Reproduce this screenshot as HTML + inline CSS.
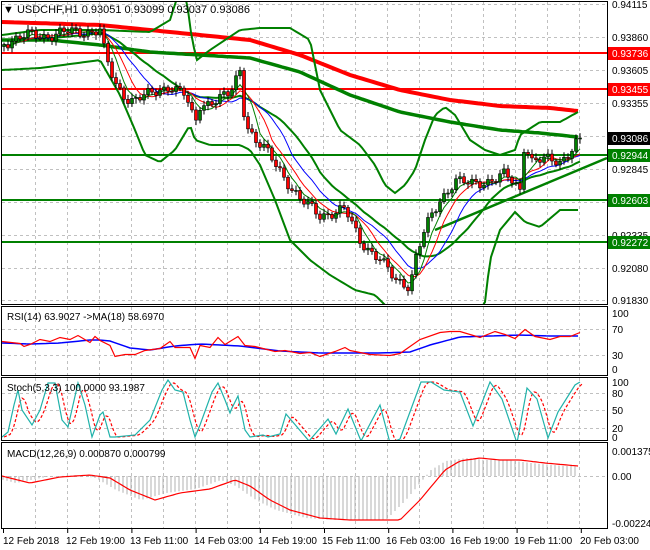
<!DOCTYPE html>
<html><head><meta charset="utf-8"><style>
html,body{margin:0;padding:0;background:#fff;}
svg{display:block;font-family:"Liberation Sans",sans-serif;}
</style></head><body>
<svg id="s" width="650" height="550" xmlns="http://www.w3.org/2000/svg">
<rect x="0" y="0" width="650" height="550" fill="#fff"/>
<defs>
<clipPath id="cm"><rect x="2" y="2" width="606" height="302"/></clipPath>
<clipPath id="cr"><rect x="2" y="308" width="606" height="67"/></clipPath>
<clipPath id="cs"><rect x="2" y="379" width="606" height="61"/></clipPath>
<clipPath id="cd"><rect x="2" y="444" width="606" height="84"/></clipPath>
</defs>
<g id="grid" stroke="#c0c0c0" stroke-dasharray="3,3" stroke-width="1"></g>
<g id="main" clip-path="url(#cm)"></g>
<g id="ind"></g>
<g fill="none" stroke="#000" stroke-width="1">
<rect x="1.5" y="1.5" width="606" height="303"/>
<rect x="1.5" y="306.5" width="606" height="69"/>
<rect x="1.5" y="377.5" width="606" height="63"/>
<rect x="1.5" y="442.5" width="606" height="86"/>
</g>
<g id="ticks" stroke="#000"></g>
<g font-size="10" fill="#000">
<text x="3" y="13" font-size="11">▼ USDCHF,H1  0.93051 0.93099 0.93037 0.93086</text>
<text x="612" y="8">0.94115</text>
<text x="612" y="41">0.93860</text>
<text x="612" y="74">0.93605</text>
<text x="612" y="107">0.93355</text>
<text x="612" y="173">0.92845</text>
<text x="612" y="239">0.92335</text>
<text x="612" y="272">0.92080</text>
<text x="612" y="304">0.91830</text>
<rect x="608" y="47" width="42" height="13" fill="#f00"/><text x="612" y="57" fill="#fff">0.93736</text>
<rect x="608" y="83" width="42" height="13" fill="#f00"/><text x="612" y="93" fill="#fff">0.93455</text>
<rect x="608" y="132" width="42" height="13" fill="#000"/><text x="612" y="142" fill="#fff">0.93086</text>
<rect x="608" y="149" width="42" height="13" fill="#008000"/><text x="612" y="159" fill="#fff">0.92944</text>
<rect x="608" y="194" width="42" height="13" fill="#008000"/><text x="612" y="204" fill="#fff">0.92603</text>
<rect x="608" y="236" width="42" height="13" fill="#008000"/><text x="612" y="246" fill="#fff">0.92272</text>
<text x="7" y="320">RSI(14) 63.9027  -&gt;MA(18) 58.6970</text>
<text x="612" y="317">100</text><text x="612" y="333">70</text><text x="612" y="359">30</text><text x="612" y="373">0</text>
<text x="7" y="391">Stoch(5,3,3) 100.0000 93.1987</text>
<text x="612" y="386">100</text><text x="612" y="397">80</text><text x="612" y="414">50</text><text x="612" y="432">20</text><text x="612" y="441">0</text>
<text x="7" y="457">MACD(12,26,9) 0.000870 0.000799</text>
<text x="612" y="455">0.001375</text><text x="612" y="480">0.00</text><text x="612" y="527">-0.002245</text>
<text x="3" y="544">12 Feb 2018</text>
<text x="66" y="544">12 Feb 19:00</text>
<text x="130" y="544">13 Feb 11:00</text>
<text x="194" y="544">14 Feb 03:00</text>
<text x="258" y="544">14 Feb 19:00</text>
<text x="322" y="544">15 Feb 11:00</text>
<text x="386" y="544">16 Feb 03:00</text>
<text x="450" y="544">16 Feb 19:00</text>
<text x="514" y="544">19 Feb 11:00</text>
<text x="580" y="544">20 Feb 03:00</text>
</g>
</svg>
<script>
var NS="http://www.w3.org/2000/svg";
function el(p,t,a){var e=document.createElementNS(NS,t);for(var k in a)e.setAttribute(k,a[k]);p.appendChild(e);return e;}
function interp(P,x){if(x<=P[0][0])return P[0][1];for(var i=1;i<P.length;i++){if(x<=P[i][0]){var a=P[i-1],b=P[i];return a[1]+(b[1]-a[1])*(x-a[0])/(b[0]-a[0]);}}return P[P.length-1][1];}
function pl(P){return P.map(function(p){return p[0].toFixed(1)+","+p[1].toFixed(1)}).join(" ");}
function curve(P,x0,x1,st){var r=[];for(var x=x0;x<=x1;x+=st)r.push([x,interp(P,x)]);return r;}
var g=document.getElementById("grid");
for(var x=35;x<607;x+=32){[[2,304],[307,375],[378,440],[443,528]].forEach(function(r){el(g,"line",{x1:x+.5,y1:r[0],x2:x+.5,y2:r[1]});});}
[4,37,70,103,136,169,202,235,268,300].forEach(function(y){el(g,"line",{x1:2,y1:y+.5,x2:607,y2:y+.5});});
[329,355].forEach(function(y){el(g,"line",{x1:2,y1:y+.5,x2:607,y2:y+.5});});
[393,410,428].forEach(function(y){el(g,"line",{x1:2,y1:y+.5,x2:607,y2:y+.5});});
[476].forEach(function(y){el(g,"line",{x1:2,y1:y+.5,x2:607,y2:y+.5});});
var tk=document.getElementById("ticks");
for(var x=3;x<607;x+=64.2){el(tk,"line",{x1:x+.5,y1:529,x2:x+.5,y2:533});}
var m=document.getElementById("main");
[[53,"#f00"],[89,"#f00"],[155,"#008000"],[200,"#008000"],[242,"#008000"]].forEach(function(l){el(m,"line",{x1:2,y1:l[0],x2:607,y2:l[0],stroke:l[1],"stroke-width":2});});
el(m,"polyline",{points:pl(curve([[2,22],[100,25],[150,30],[200,35],[250,40],[300,55],[350,75],[400,90],[450,100],[500,106],[550,108],[578,111]],2,578,4)),fill:"none",stroke:"#f00","stroke-width":4});
el(m,"polyline",{points:pl(curve([[2,40],[50,40],[100,45],[150,52],[200,55],[250,58],[300,72],[350,95],[400,112],[450,122],[500,130],[540,133],[578,137]],2,578,4)),fill:"none",stroke:"#008000","stroke-width":3.5});
el(m,"line",{x1:435,y1:230,x2:607,y2:158,stroke:"#008000","stroke-width":2.5});
var up=[[2,35],[40,30],[100,30],[150,32],[170,20],[178,-5],[186,-5],[192,40],[197,60],[210,50],[240,30],[260,28],[290,28],[310,40],[320,90],[340,130],[360,145],[375,165],[385,185],[395,193],[405,185],[415,170],[425,140],[435,115],[445,107],[455,115],[470,140],[485,150],[500,155],[515,150],[520,135],[540,122],[560,122],[578,112]];
var lo=[[2,70],[40,68],[100,60],[120,95],[135,130],[145,155],[160,162],[175,150],[190,125],[195,140],[210,145],[240,145],[250,150],[260,165],[275,200],[290,240],[310,260],[330,275],[355,290],[375,295],[390,310],[480,310],[485,302],[490,260],[500,230],[515,212],[525,222],[540,227],[560,210],[578,210]];
el(m,"polyline",{points:pl(curve(up,2,578,3)),fill:"none",stroke:"#008000","stroke-width":2});
el(m,"polyline",{points:pl(curve(lo,2,578,3)),fill:"none",stroke:"#008000","stroke-width":2});
var PR=[[4,42],[20,38],[30,35],[45,36],[60,33],[80,32],[100,30],[105,55],[115,85],[130,100],[150,95],[170,85],[185,95],[195,125],[200,105],[215,100],[230,95],[240,70],[245,120],[255,140],[265,150],[280,170],[300,200],[320,215],[345,210],[360,240],[380,260],[395,280],[410,285],[415,260],[425,230],[440,200],[455,180],[470,185],[490,180],[505,175],[515,185],[520,190],[525,135],[530,160],[540,160],[560,162],[570,150],[578,140]];
var N=145,cl=[],xs=[];
for(var i=0;i<N;i++){var x=4+i*4;xs.push(x);cl.push(interp(PR,x)+4*Math.sin(i*1.7)+3*Math.sin(i*0.63+1));}
cl[N-1]=138;
function sma(a,n){return a.map(function(v,i){var s=0,c=0;for(var j=Math.max(0,i-n+1);j<=i;j++){s+=a[j];c++;}return s/c;});}
var mid=sma(cl,20);
el(m,"polyline",{points:pl(xs.map(function(x,i){return[x,mid[i]]})),fill:"none",stroke:"#008000","stroke-width":2});
[[13,"#00f"],[8,"#f00"],[5,"#008000"]].forEach(function(q){var s=sma(cl,q[0]);el(m,"polyline",{points:pl(xs.map(function(x,i){return[x,s[i]]})),fill:"none",stroke:q[1],"stroke-width":1});});
for(var i=0;i<N;i++){var o=i?cl[i-1]:cl[0]+2,c=cl[i],x=xs[i];var hi=Math.min(o,c)-2-3*Math.abs(Math.sin(i*2.3)),lw=Math.max(o,c)+2+3*Math.abs(Math.cos(i*1.9));
el(m,"line",{x1:x,y1:hi,x2:x,y2:lw,stroke:"#000","stroke-width":1});
var t=Math.min(o,c),h=Math.max(1,Math.abs(o-c));
el(m,"rect",{x:x-1.5,y:t,width:3,height:h,fill:(c<o?"#008000":"#f00"),stroke:"#000","stroke-width":0.6});}
var ind=document.getElementById("ind");
var gr=el(ind,"g",{"clip-path":"url(#cr)"});
var rsiR=[[2,343],[20,342],[24,348],[30,343],[40,341],[50,340],[60,339],[70,338],[78,337],[90,341],[95,338],[100,339],[110,347],[115,355],[125,356],[135,353],[145,352],[160,347],[170,343],[175,346],[190,349],[195,357],[200,347],[210,346],[218,339],[225,343],[238,338],[245,344],[255,348],[275,350],[285,352],[300,352],[310,354],[320,355],[335,353],[345,346],[350,352],[370,353],[390,357],[400,352],[410,348],[420,338],[440,334],[450,330],[460,333],[480,336],[495,333],[505,333],[515,340],[525,328],[535,338],[550,338],[560,338],[570,335],[580,334]];
var rsiB=[[2,343],[30,344],[60,343],[90,340],[100,340],[110,341],[130,348],[150,350],[175,346],[200,344],[240,346],[280,351],[320,353],[380,353],[410,352],[430,345],[460,337],[490,336],[520,335],[550,336],[580,336]];
el(gr,"polyline",{points:pl(curve(rsiB,2,580,4)),fill:"none",stroke:"#00f","stroke-width":1.5});
el(gr,"polyline",{points:pl(rsiR.map(function(p,i){return[p[0],p[1]+(i%2?1.5:-1.5)]})),fill:"none",stroke:"#f00","stroke-width":1.2});
var gs=el(ind,"g",{"clip-path":"url(#cs)"});
var st=[[2,437],[8,432],[14,405],[18,390],[22,410],[32,425],[40,410],[48,383],[55,383],[62,420],[68,427],[78,383],[85,405],[92,437],[100,415],[103,412],[110,437],[115,437],[135,435],[140,430],[150,420],[162,390],[168,380],[175,390],[183,392],[190,420],[195,437],[200,425],[212,392],[218,383],[225,400],[230,413],[232,408],[238,396],[245,430],[250,437],[263,435],[268,437],[280,434],[286,414],[309,441],[328,419],[336,434],[348,409],[361,441],[380,405],[390,443],[400,439],[421,382],[431,382],[444,390],[460,392],[473,426],[490,382],[502,399],[517,443],[527,388],[537,399],[548,438],[558,412],[575,385],[580,382]];
var sm=curve(st,2,580,2);
var sig=sm.map(function(p,i){var s=0,c=0;for(var j=Math.max(0,i-3);j<=i;j++){s+=sm[j][1];c++;}return[p[0]+2,s/c];});
el(gs,"polyline",{points:pl(sig),fill:"none",stroke:"#f00","stroke-width":1.2,"stroke-dasharray":"3,2"});
el(gs,"polyline",{points:pl(st),fill:"none",stroke:"#20b2aa","stroke-width":1.2});
var gd=el(ind,"g",{"clip-path":"url(#cd)"});
var sg=[[2,476],[30,483],[60,477],[90,475],[110,478],[130,490],[155,500],[180,493],[210,489],[235,480],[250,486],[270,500],[290,510],[320,518],[350,520],[380,520],[400,520],[420,500],[445,470],[460,461],[480,458],[500,460],[520,460],[545,463],[578,466]];
for(var x=3;x<=578;x+=4){var v=interp(sg,x+14);el(gd,"line",{x1:x,y1:476,x2:x,y2:v,stroke:"#b0b0b0","stroke-width":1});}
el(gd,"polyline",{points:pl(curve(sg,2,578,3)),fill:"none",stroke:"#f00","stroke-width":1.2});
</script>
</body></html>
